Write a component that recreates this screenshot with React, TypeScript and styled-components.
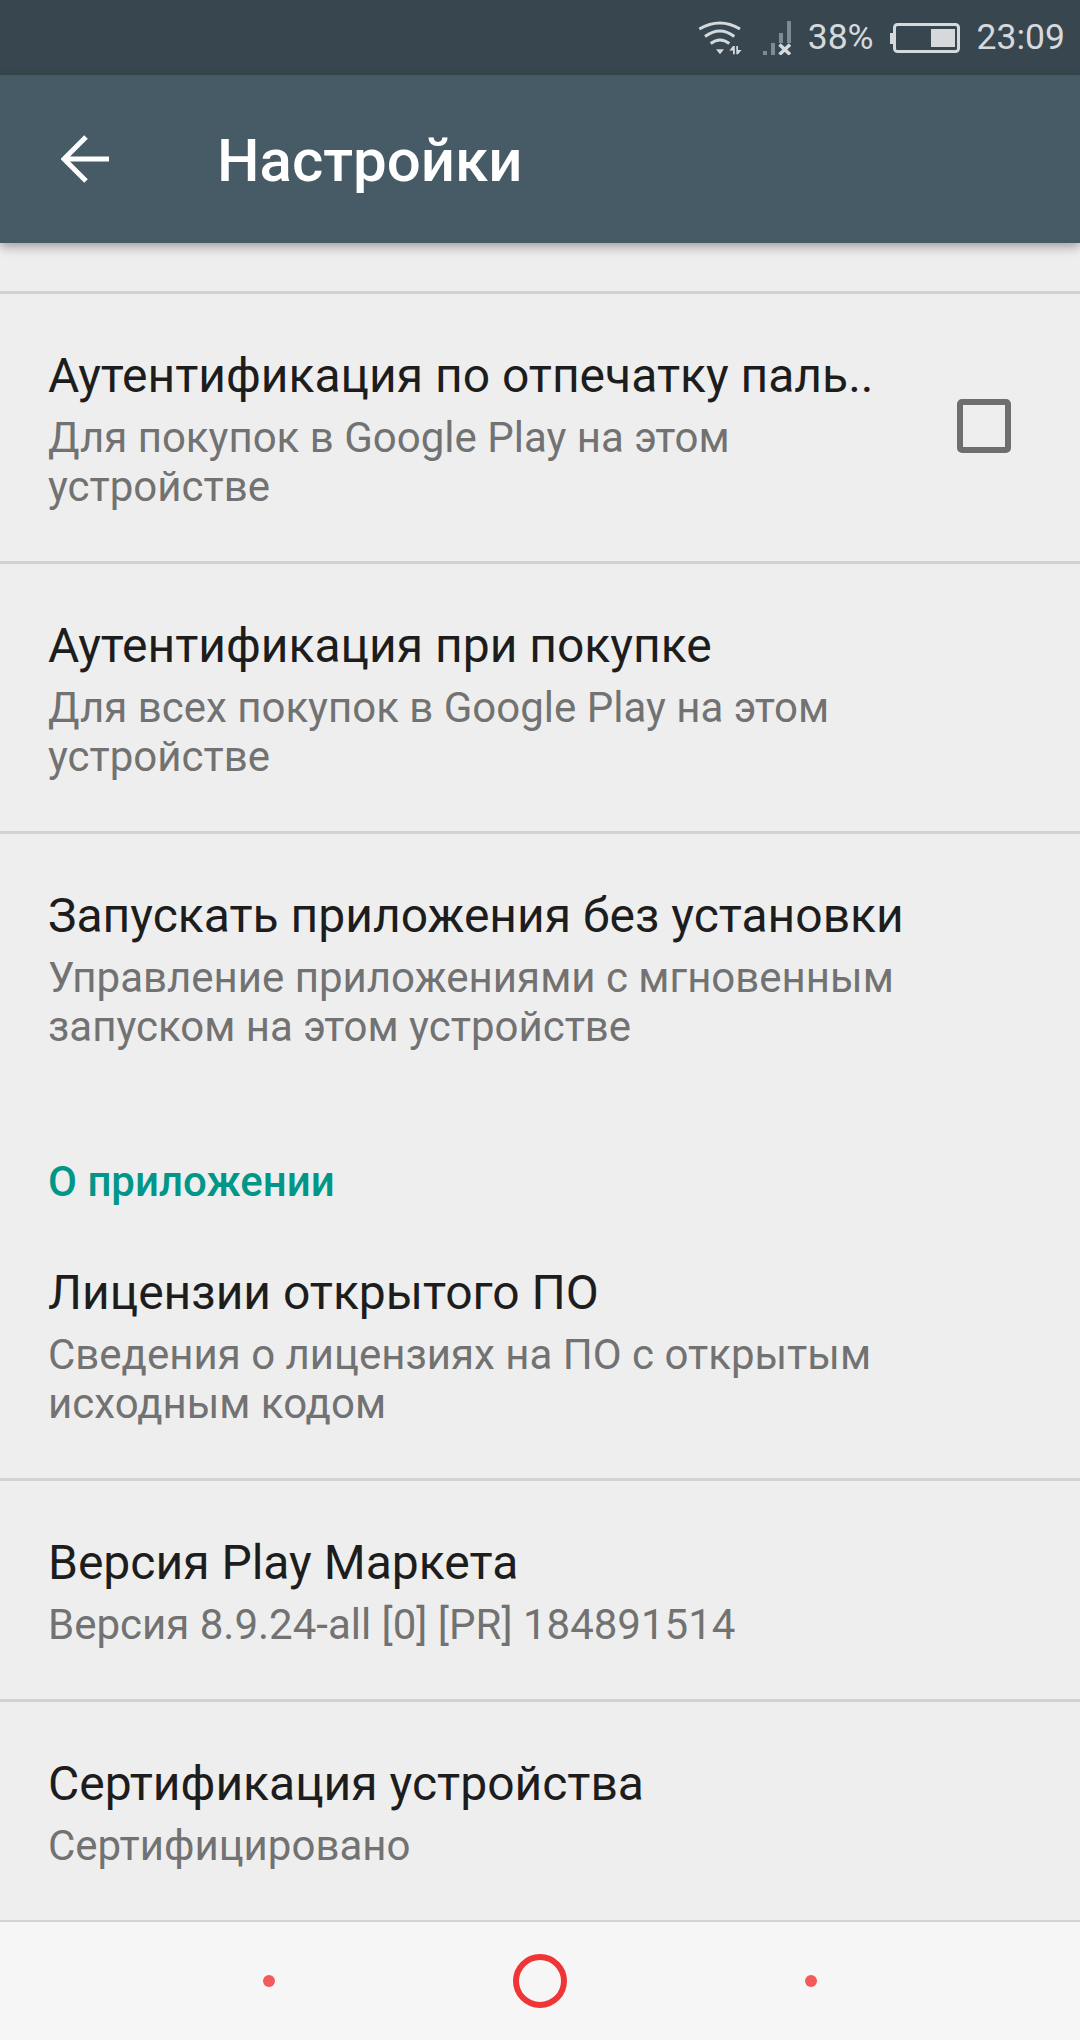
import { createGlobalStyle } from "styled-components";
import styled from "styled-components";

const GlobalStyle = createGlobalStyle`
  html, body {
    margin: 0;
    padding: 0;
    background: #eeeeee;
  }
  * {
    box-sizing: border-box;
  }
`;

const Screen = styled.div`
  width: 1080px;
  height: 2040px;
  display: flex;
  flex-direction: column;
  overflow: hidden;
  background: #eeeeee;
  font-family: Roboto, "Liberation Sans", sans-serif;
`;

const StatusBar = styled.div`
  height: 75px;
  flex: none;
  display: flex;
  align-items: center;
  justify-content: flex-end;
  padding-right: 15px;
  background: #38474f;
  color: #d5d9dc;
  font-size: 35.5px;
`;

const StatusText = styled.span<{ $gap: number }>`
  margin-left: ${(props) => props.$gap}px;
  line-height: 75px;
`;

const StatusIcon = styled.svg<{ $gap?: number }>`
  display: block;
  margin-left: ${(props) => props.$gap ?? 0}px;
`;

const Toolbar = styled.header`
  height: 168px;
  flex: none;
  display: flex;
  align-items: center;
  padding-left: 61px;
  background: #475b67;
  box-shadow: 0 4px 10px rgba(0, 0, 0, 0.32);
  position: relative;
  z-index: 1;
`;

const Title = styled.h1`
  margin: 2px 0 0 108px;
  font-size: 60px;
  font-weight: 500;
  color: #ffffff;
`;

const List = styled.main`
  flex: 1;
  padding-top: 48px;
  min-height: 0;
`;

const Row = styled.div<{ $divider?: boolean }>`
  display: flex;
  align-items: center;
  justify-content: space-between;
  padding: 0 48px;
  border-top: ${(props) => (props.$divider ? "3px solid #d2d2d2" : "none")};
`;

const RowText = styled.div<{ $top: number; $bottom: number }>`
  padding: ${(props) => props.$top}px 0 ${(props) => props.$bottom}px;
`;

const RowTitle = styled.div`
  font-size: 48px;
  line-height: 56px;
  color: #1d1d1d;
  white-space: nowrap;
`;

const RowSub = styled.div`
  margin-top: 9px;
  font-size: 42px;
  line-height: 49px;
  color: #727272;
  max-width: 860px;
`;

const CheckBox = styled.div`
  width: 54px;
  height: 54px;
  margin: 0 21px 4px 0;
  border: 6px solid #6e6e6e;
  border-radius: 5px;
`;

const SectionHeader = styled.div`
  padding: 0 48px;
  margin-top: 106px;
  font-size: 42px;
  line-height: 50px;
  font-weight: 500;
  color: #009688;
`;

const NavBar = styled.nav`
  height: 120px;
  flex: none;
  display: flex;
  align-items: center;
  justify-content: center;
  gap: 238px;
  background: #f6f6f6;
  border-top: 2px solid #d2d2d2;
`;

const NavDot = styled.span`
  width: 12px;
  height: 12px;
  border-radius: 50%;
  background: #f45a5a;
`;

const NavHome = styled.span`
  width: 54px;
  height: 54px;
  border-radius: 50%;
  border: 6px solid #ef3535;
`;

function WifiIcon() {
  return (
    <StatusIcon width="44" height="34" viewBox="0 0 44 34" fill="none">
      <path d="M1.3 8 Q22 -4 42 8" stroke="#d5d9dc" strokeWidth="3" />
      <path d="M7 15.5 Q22 4.5 36.3 15.5" stroke="#d5d9dc" strokeWidth="3" />
      <path d="M12.7 22.5 Q22 15.5 31.3 22.5" stroke="#d5d9dc" strokeWidth="3" />
      <path d="M18 28.3 H26 L22 33.3 Z" fill="#d5d9dc" />
      <path d="M31.3 29.5 L35 25 H36.8 V33.3 H35 V29.5 Z" fill="#d5d9dc" />
      <path d="M38.3 25 H40 V29 H43.5 L40 33.3 H38.3 Z" fill="#d5d9dc" />
    </StatusIcon>
  );
}

function SignalIcon() {
  return (
    <StatusIcon $gap={21} width="28" height="34" viewBox="0 0 28 34">
      <rect x="0" y="30" width="4" height="4" fill="#7f8b92" />
      <rect x="8" y="22" width="4" height="12" fill="#7f8b92" />
      <rect x="16" y="12" width="4" height="10" fill="#7f8b92" />
      <rect x="24" y="0" width="4" height="22" fill="#7f8b92" />
      <path d="M16.5 23.5 L27 33.5 M27 23.5 L16.5 33.5" stroke="#d5d9dc" strokeWidth="3.5" />
    </StatusIcon>
  );
}

function BatteryIcon() {
  return (
    <StatusIcon $gap={16} width="70" height="30" viewBox="0 0 70 30" fill="none">
      <rect x="0" y="10" width="4" height="11" fill="#d5d9dc" />
      <rect x="4.5" y="1.5" width="64" height="27" rx="3" stroke="#d5d9dc" strokeWidth="3" />
      <rect x="41" y="6" width="24" height="18" fill="#d5d9dc" />
    </StatusIcon>
  );
}

function BackArrow() {
  return (
    <svg width="48" height="48" viewBox="0 0 48 48" fill="none">
      <path d="M48 24 H3 M25 2 L3 24 L25 46" stroke="#ffffff" strokeWidth="5" />
    </svg>
  );
}

export default function App() {
  return (
    <Screen>
      <GlobalStyle />
      <StatusBar>
        <WifiIcon />
        <SignalIcon />
        <StatusText $gap={17}>38%</StatusText>
        <BatteryIcon />
        <StatusText $gap={17}>23:09</StatusText>
      </StatusBar>
      <Toolbar>
        <BackArrow />
        <Title>Настройки</Title>
      </Toolbar>
      <List>
        <Row $divider>
          <RowText $top={54} $bottom={50}>
            <RowTitle>Аутентификация по отпечатку паль..</RowTitle>
            <RowSub>Для покупок в Google Play на этом устройстве</RowSub>
          </RowText>
          <CheckBox />
        </Row>
        <Row $divider>
          <RowText $top={54} $bottom={50}>
            <RowTitle>Аутентификация при покупке</RowTitle>
            <RowSub>Для всех покупок в Google Play на этом устройстве</RowSub>
          </RowText>
        </Row>
        <Row $divider>
          <RowText $top={54} $bottom={0}>
            <RowTitle>Запускать приложения без установки</RowTitle>
            <RowSub>Управление приложениями с мгновенным запуском на этом устройстве</RowSub>
          </RowText>
        </Row>
        <SectionHeader>О приложении</SectionHeader>
        <Row>
          <RowText $top={58} $bottom={50}>
            <RowTitle>Лицензии открытого ПО</RowTitle>
            <RowSub>Сведения о лицензиях на ПО с открытым исходным кодом</RowSub>
          </RowText>
        </Row>
        <Row $divider>
          <RowText $top={54} $bottom={50}>
            <RowTitle>Версия Play Маркета</RowTitle>
            <RowSub>Версия 8.9.24-all [0] [PR] 184891514</RowSub>
          </RowText>
        </Row>
        <Row $divider>
          <RowText $top={54} $bottom={50}>
            <RowTitle>Сертификация устройства</RowTitle>
            <RowSub>Сертифицировано</RowSub>
          </RowText>
        </Row>
      </List>
      <NavBar>
        <NavDot />
        <NavHome />
        <NavDot />
      </NavBar>
    </Screen>
  );
}
